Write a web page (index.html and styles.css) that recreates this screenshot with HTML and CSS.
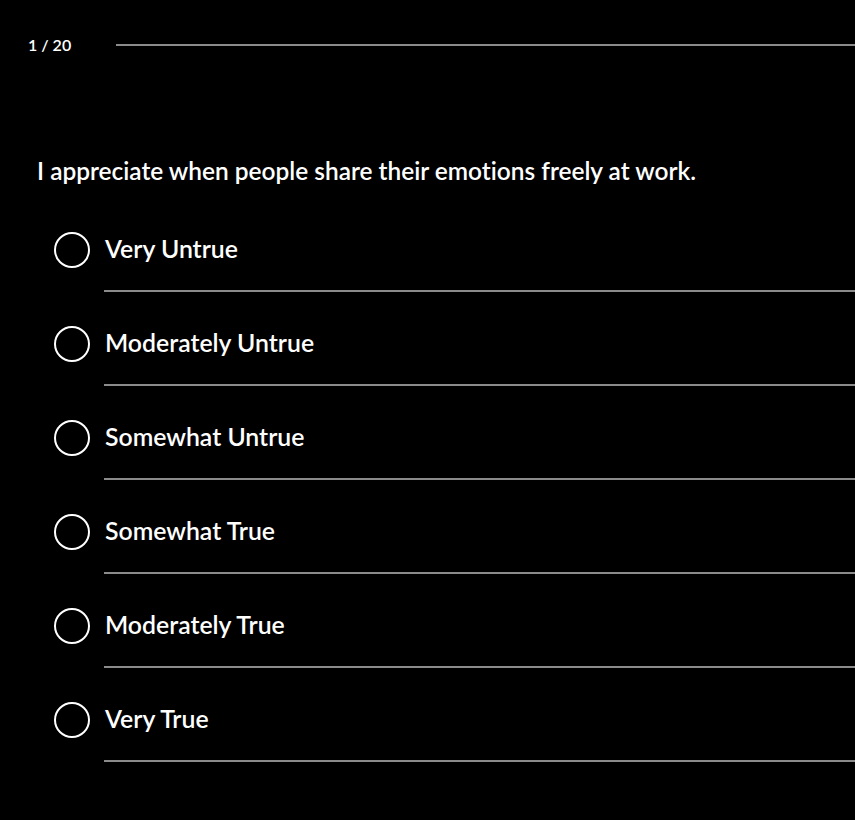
FILE: index.html
```html
<!DOCTYPE html>
<html>
<head>
<meta charset="utf-8">
<link rel="stylesheet" href="styles.css">
</head>
<body>
<div class="page">
  <div class="progress">
    <span class="count">1 / 20</span>
    <div class="bar"></div>
  </div>
  <h1 class="question">I appreciate when people share their emotions freely at work.</h1>
  <ul class="options">
    <li class="option"><span class="radio"></span><span class="label">Very Untrue</span></li>
    <li class="option"><span class="radio"></span><span class="label">Moderately Untrue</span></li>
    <li class="option"><span class="radio"></span><span class="label">Somewhat Untrue</span></li>
    <li class="option"><span class="radio"></span><span class="label">Somewhat True</span></li>
    <li class="option"><span class="radio"></span><span class="label">Moderately True</span></li>
    <li class="option"><span class="radio"></span><span class="label">Very True</span></li>
  </ul>
</div>
</body>
</html>
```

FILE: styles.css
```css
html, body {
  margin: 0;
  padding: 0;
  background: #000;
  color: #fff;
  font-family: Lato, "Open Sans", sans-serif;
  font-variant-ligatures: none;
}
.page {
  width: 855px;
  height: 820px;
  overflow: hidden;
}
.progress {
  display: flex;
  align-items: center;
  padding: 34px 0 0 28px;
  height: 22px;
}
.count {
  font-size: 16px;
  font-weight: 600;
  line-height: 22px;
  white-space: nowrap;
}
.bar {
  flex: 1;
  height: 2px;
  background: #8a8a8a;
  margin-left: 45px;
}
.question {
  margin: 100px 0 0 37px;
  font-size: 24.45px;
  font-weight: 600;
  line-height: 30px;
}
.options {
  list-style: none;
  margin: 12px 0 0;
  padding: 0 0 0 54px;
}
.option {
  display: flex;
  align-items: flex-start;
}
.radio {
  flex: none;
  width: 32px;
  height: 32px;
  border: 2px solid #fff;
  border-radius: 50%;
  margin-top: 34px;
  margin-right: 14px;
}
.label {
  flex: 1;
  font-size: 24.8px;
  font-weight: 600;
  line-height: 30px;
  padding: 36px 0 26px 1px;
  border-bottom: 2px solid #8a8a8a;
}
```
